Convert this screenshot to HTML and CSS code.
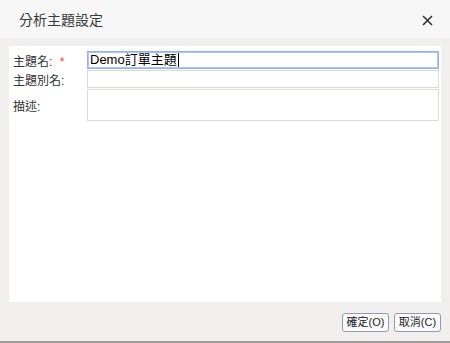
FILE: index.html
```html
<!DOCTYPE html>
<html lang="zh-Hant">
<head>
    <meta charset="UTF-8">
    <title>分析主題設定</title>
    <link rel="stylesheet" href="styles.css">
</head>
<body>
    <div class="dialog">
        <div class="dialog-header">
            <span class="dialog-title">分析主題設定</span>
            <span class="close">
                <svg width="11" height="11" viewBox="0 0 11 11">
                    <path d="M1 1 L10 10 M10 1 L1 10" stroke="#333" stroke-width="1.6" fill="none"/>
                </svg>
            </span>
        </div>

        <div class="dialog-body">
            <div class="panel">
                <div class="form-row">
                    <label for="subject-name">主題名: <span class="required">*</span></label>
                    <div class="field field-focus">Demo訂單主題<span class="caret"></span></div>
                </div>
                <div class="form-row">
                    <label for="subject-alias">主題別名:</label>
                    <div class="field"></div>
                </div>
                <div class="form-row">
                    <label for="subject-desc">描述:</label>
                    <div class="field field-tall"></div>
                </div>
            </div>
        </div>

        <div class="dialog-footer">
            <button class="btn">確定(O)</button>
            <button class="btn">取消(C)</button>
        </div>
    </div>
</body>
</html>
```

FILE: styles.css
```css
body {
    margin: 0;
    padding: 0;
    font-family: "Liberation Sans", "Noto Sans CJK TC", sans-serif;
    color: #333;
    background-color: #fff;
}

.dialog {
    width: 450px;
    height: 341px;
    background-color: #f0efed;
    border-bottom: 2px solid #9c9c9c;
    display: flex;
    flex-direction: column;
}

.dialog-header {
    height: 38px;
    flex-shrink: 0;
    background-color: #f7f7f7;
    padding: 0 17px 0 19px;
    display: flex;
    align-items: center;
    justify-content: space-between;
}

.dialog-title {
    font-size: 14px;
    color: #3a3a3a;
}

.close {
    display: flex;
    margin-top: 3px;
}

.dialog-body {
    padding: 8px 9px 0;
}

.panel {
    height: 251px;
    background-color: #fff;
    padding: 5px 2px 0 4px;
    display: flex;
    flex-direction: column;
    gap: 1px;
}

.form-row {
    display: grid;
    grid-template-columns: 74px 1fr;
    align-items: center;
}

.form-row label {
    font-size: 12px;
    color: #333;
}

.required {
    color: #e03c3c;
    margin-left: 4px;
}

.field {
    height: 16px;
    border: 1px solid #dcdad6;
    background-color: #fff;
    font-size: 13px;
    line-height: 16px;
    padding-left: 2px;
    color: #000;
    display: flex;
    align-items: center;
}

.field-focus {
    border: 1px solid #8fb3f2;
    box-shadow: inset 0 0 0 1px #a9c6f7;
}

.field-tall {
    height: 30px;
}

.caret {
    width: 1px;
    height: 14px;
    background-color: #000;
    margin-left: 1px;
}

.dialog-footer {
    padding: 11px 9px 0;
    display: flex;
    justify-content: flex-end;
    gap: 5px;
}

.btn {
    width: 47px;
    height: 19px;
    padding: 0;
    font-family: "Liberation Sans", "Noto Sans CJK TC", sans-serif;
    font-size: 11px;
    line-height: 15px;
    color: #222;
    background-color: #fafafa;
    border: 1px solid #8e9cb2;
    border-radius: 3px;
}
```
